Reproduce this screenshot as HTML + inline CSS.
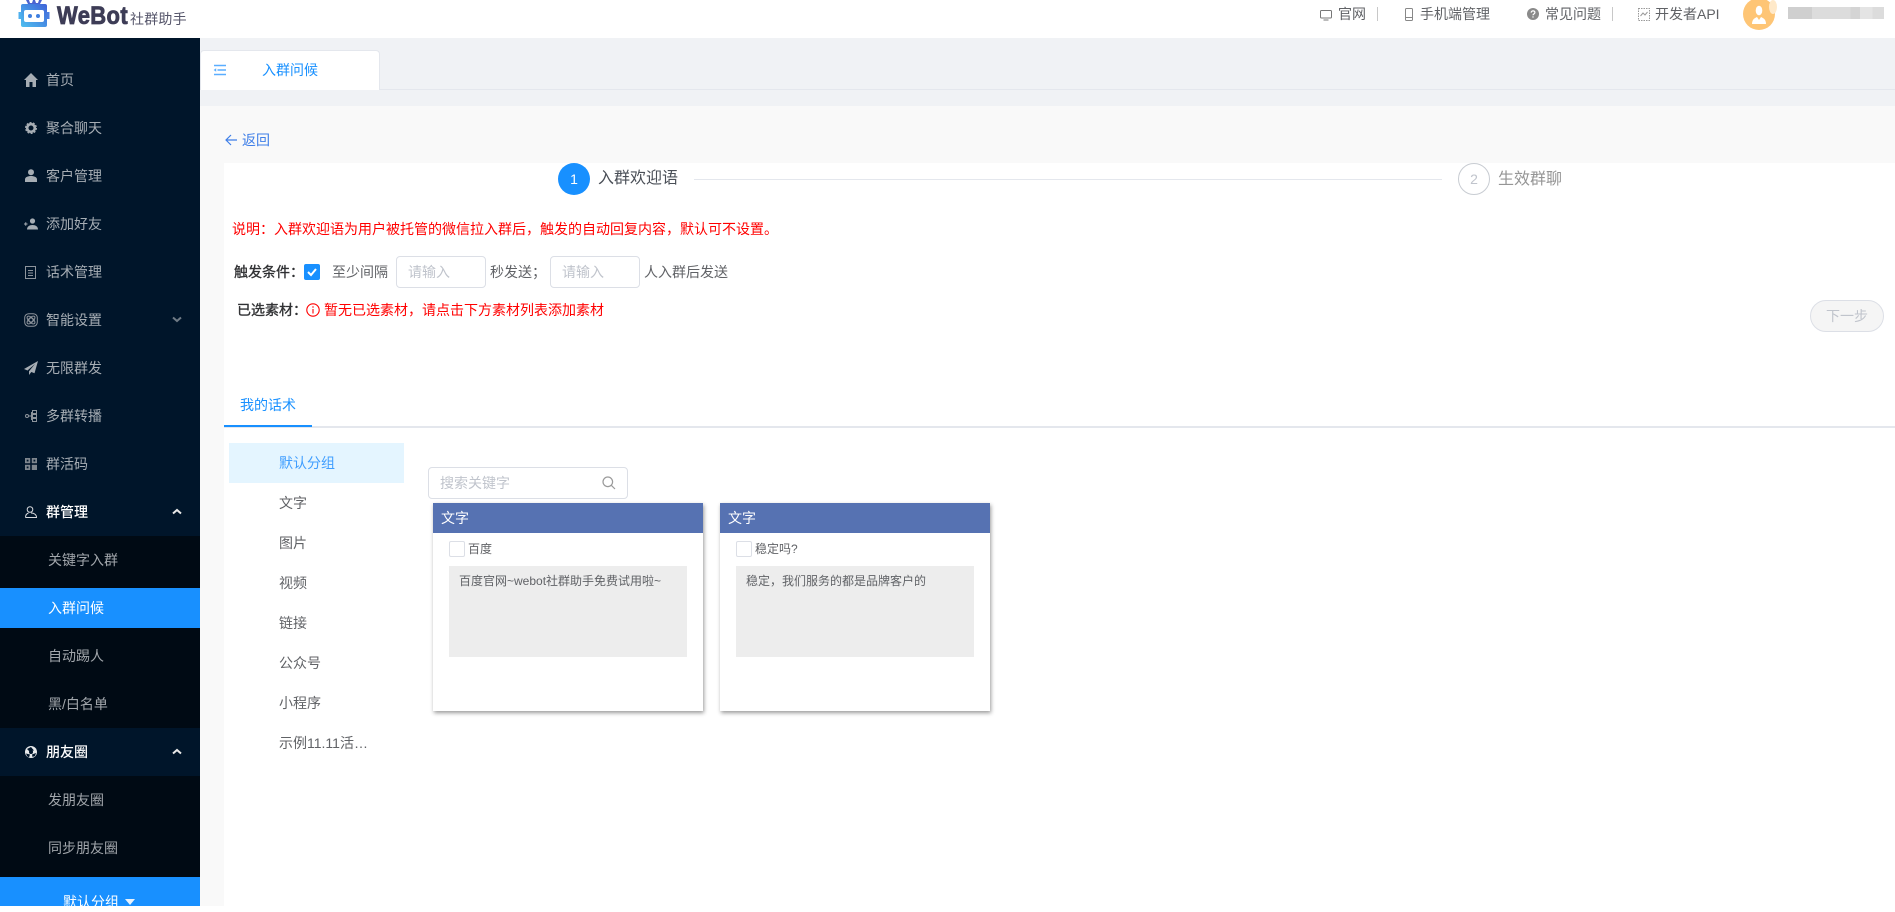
<!DOCTYPE html>
<html lang="zh">
<head>
<meta charset="utf-8">
<title>WeBot 社群助手</title>
<style>
*{box-sizing:border-box;margin:0;padding:0}
html,body{width:1895px;height:906px;overflow:hidden;background:#fff;font-family:"Liberation Sans","Noto Sans CJK SC",sans-serif;font-size:14px;color:#606266}
.a{position:absolute}
.t{position:absolute;line-height:20px;height:20px;white-space:nowrap}
.s{color:#a6adb4}
.b{-webkit-text-stroke:.35px currentColor}
svg{position:absolute;display:block}
.sub{color:#a1a6ab}
.card{position:absolute;top:503px;width:270px;height:208px;background:#fff;box-shadow:1px 2px 4px rgba(0,0,0,.4)}
.ch{position:absolute;left:0;top:0;width:100%;height:30px;background:#5672b2;color:#fff;line-height:30px;padding-left:8px;font-size:14px}
.cb{position:absolute;left:16px;top:38px;width:16px;height:16px;background:#fff;border:1px solid #dcdfe6;border-radius:2px}
.cl{position:absolute;left:35px;top:36px;font-size:12px;line-height:20px;color:#606266}
.cx{position:absolute;left:16px;top:63px;width:238px;height:91px;background:#ededed;font-size:12px;line-height:16px;padding:7px 10px;color:#606266}
.inp{position:absolute;width:90px;height:32px;border:1px solid #dcdfe6;border-radius:4px;background:#fff;color:#c0c4cc;line-height:30px;padding-left:11px;top:256px}
.li{position:absolute;left:279px;line-height:20px;height:20px;color:#606266;white-space:nowrap}
</style>
</head>
<body>
<!-- header -->
<div class="a" style="left:0;top:0;width:1895px;height:38px;background:#fff"></div>
<svg style="left:18px;top:0" width="32" height="28" viewBox="0 0 32 28">
<defs><linearGradient id="g" x1="0" y1="1" x2="1" y2="0"><stop offset="0" stop-color="#4fc0f0"/><stop offset="1" stop-color="#3f62d8"/></linearGradient></defs>
<path d="M8 0l2 4h12l2-4h-3l-1 3h-2l-1-3h-2l-1 3h-2l-1-3z" fill="#4a62d0"/>
<rect x="3" y="4" width="26" height="23" rx="2" fill="url(#g)"/>
<rect x="0.5" y="12" width="3" height="7" fill="#4fb0ee"/><rect x="28.500" y="12" width="3" height="7" fill="#4a7ee0"/>
<rect x="6" y="10" width="20" height="12" rx="2" fill="#fff"/>
<circle cx="12" cy="16" r="2" fill="#3f7fe0"/><circle cx="20" cy="16" r="2" fill="#3f7fe0"/>
</svg>
<div class="t" style="left:57px;top:3px;line-height:26px;height:26px;font-size:25px;font-weight:bold;color:#3d3c56;-webkit-text-stroke:.8px #3d3c56;letter-spacing:.4px;transform:scaleX(.88);transform-origin:0 50%">WeBot</div>
<div class="t" style="left:130px;top:9px;font-size:14px;color:#55556a;letter-spacing:.2px">社群助手</div>

<svg style="left:1320px;top:9px" width="12" height="12" viewBox="0 0 12 12" fill="none" stroke="#777"><rect x=".5" y="1.500" width="11" height="7.500" rx="1"/><path d="M3.500 11h5" /></svg>
<div class="t" style="left:1338px;top:4px;color:#606266">官网</div>
<div class="a" style="left:1377px;top:7px;width:1px;height:14px;background:#c8c8c8"></div>
<svg style="left:1404px;top:8px" width="10" height="13" viewBox="0 0 10 13" fill="none" stroke="#888"><rect x="1.500" y=".5" width="7" height="12" rx="1"/><path d="M1.500 9.500h7"/></svg>
<div class="t" style="left:1420px;top:4px;color:#606266">手机端管理</div>
<svg style="left:1527px;top:8px" width="12" height="12" viewBox="0 0 12 12"><circle cx="6" cy="6" r="6" fill="#8a8a8a"/><path d="M4.200 4.600c0-2.300 3.700-2.300 3.700 0 0 1.300-1.900 1.300-1.900 2.700" fill="none" stroke="#fff" stroke-width="1.200"/><rect x="5.400" y="8.300" width="1.200" height="1.300" fill="#fff"/></svg>
<div class="t" style="left:1545px;top:4px;color:#606266">常见问题</div>
<div class="a" style="left:1612px;top:7px;width:1px;height:14px;background:#c8c8c8"></div>
<svg style="left:1638px;top:8px" width="12" height="13" viewBox="0 0 12 13" fill="none" stroke="#999" stroke-dasharray="1.500 1"><rect x=".5" y=".5" width="11" height="12"/><path d="M2.500 8l2.500-3 2 2 2.500-3" stroke-dasharray="none"/></svg>
<div class="t" style="left:1655px;top:4px;color:#606266">开发者API</div>
<div class="a" style="left:1743px;top:-2px;width:32px;height:32px;border-radius:50%;background:#fec575"></div>
<div class="a" style="left:1769px;top:0;width:8px;height:14px;border-radius:50%;background:#ffe9c9"></div>
<svg style="left:1751px;top:5px" width="16" height="20" viewBox="0 0 16 20"><ellipse cx="8" cy="5.500" rx="3.300" ry="4.800" fill="#fff"/><path d="M1 19c0-5 3-6 5-7l2 3 2-3c2 1 5 2 5 7z" fill="#fff"/></svg>
<div class="a" style="left:1788px;top:7px;width:96px;height:12px;background:linear-gradient(90deg,#cfcfcf 0,#cfcfcf 25%,#dcdcdc 25%,#dcdcdc 65%,#d4d4d4 65%,#d4d4d4 75%,#e4e4e4 75%,#e4e4e4 88%,#dcdcdc 88%)"></div>

<!-- sidebar -->
<div class="a" style="left:0;top:38px;width:200px;height:868px;background:#00152a"></div>
<div class="a" style="left:0;top:536px;width:200px;height:192px;background:#000a14"></div>
<div class="a" style="left:0;top:776px;width:200px;height:101px;background:#000a14"></div>
<div class="a" style="left:0;top:588px;width:200px;height:40px;background:#1890ff"></div>
<div class="a" style="left:0;top:877px;width:200px;height:29px;background:#1890ff"></div>

<!-- sidebar icons -->
<svg style="left:24px;top:73px" width="14" height="14" viewBox="0 0 14 14"><path d="M7 0L0 7h2v7h3.500V9h3v5H12V7h2z" fill="#a6adb4"/></svg>
<svg style="left:25px;top:122px" width="12" height="12" viewBox="0 0 12 12"><circle cx="6" cy="6" r="3.800" fill="none" stroke="#a6adb4" stroke-width="2.600"/><circle cx="6" cy="6" r="5.400" fill="none" stroke="#a6adb4" stroke-width="1.200" stroke-dasharray="2 1.400"/></svg>
<svg style="left:25px;top:169px" width="12" height="13" viewBox="0 0 12 13"><circle cx="6" cy="3.200" r="3" fill="#a6adb4"/><path d="M0 13v-2.500C0 8 3 7 6 7s6 1 6 3.500V13z" fill="#a6adb4"/></svg>
<svg style="left:24px;top:218px" width="14" height="12" viewBox="0 0 14 12"><circle cx="8.500" cy="3" r="2.600" fill="#a6adb4"/><path d="M3 11.500c0-3 2.500-4.500 5.500-4.500s5.500 1.500 5.500 4.500z" fill="#a6adb4"/><path d="M0 6h3.500M1.750 4.250v3.500" stroke="#a6adb4"/></svg>
<svg style="left:25px;top:266px" width="12" height="13" viewBox="0 0 12 13" fill="none" stroke="#8d949c"><rect x=".5" y=".5" width="10" height="12"/><path d="M3 4.500h5M3 7h5M3 9.500h5"/></svg>
<svg style="left:24px;top:313px" width="14" height="14" viewBox="0 0 14 14" fill="none" stroke="#8d949c"><rect x=".7" y=".7" width="12.600" height="12.600" rx="4"/><circle cx="7" cy="7" r="2"/><ellipse cx="7" cy="7" rx="5" ry="2.400" transform="rotate(45 7 7)"/><ellipse cx="7" cy="7" rx="5" ry="2.400" transform="rotate(-45 7 7)"/></svg>
<svg style="left:24px;top:361px" width="14" height="14" viewBox="0 0 14 14"><path d="M14 0L0 8l3.500 1.500L11 3 5 10.200V14l2.300-3 3.200 1.300z" fill="#a6adb4"/></svg>
<svg style="left:25px;top:410px" width="12" height="12" viewBox="0 0 12 12" fill="none" stroke="#8d949c"><circle cx="2" cy="6" r="1.500"/><path d="M3.500 6h3M6.500 2v8"/><rect x="7.500" y=".5" width="4" height="3"/><rect x="7.500" y="4.500" width="4" height="3"/><rect x="7.500" y="8.500" width="4" height="3"/></svg>
<svg style="left:25px;top:458px" width="12" height="12" viewBox="0 0 12 12" fill="#7f868e"><rect x="0" y="0" width="5.200" height="5.200"/><rect x="6.800" y="0" width="5.200" height="5.200"/><rect x="0" y="6.800" width="5.200" height="5.200"/><rect x="6.800" y="6.800" width="5.200" height="5.200"/><rect x="1.700" y="1.700" width="1.800" height="1.800" fill="#00152a"/><rect x="8.500" y="1.700" width="1.800" height="1.800" fill="#00152a"/><rect x="1.700" y="8.500" width="1.800" height="1.800" fill="#00152a"/></svg>
<svg style="left:25px;top:506px" width="12" height="12" viewBox="0 0 12 12" fill="none" stroke="#d8dade"><circle cx="5" cy="3.500" r="2.800"/><path d="M.5 11.500c0-3 1.500-4 3-4.500M6 7c3 0 5.500 1.500 5.500 4.500H.5"/></svg>
<svg style="left:25px;top:746px" width="12" height="12" viewBox="0 0 12 12"><circle cx="6" cy="6" r="6" fill="#e8eaec"/><circle cx="6" cy="6" r="2" fill="#00152a"/><path d="M6 1L9 4.500 4 5 2 3zM11 7L7 8.500 7.500 11 10 10zM1 7.500L5 8.500 4 11.500 2 10z" fill="#00152a"/></svg>

<!-- sidebar text -->
<div class="t s" style="left:46px;top:70px">首页</div>
<div class="t s" style="left:46px;top:118px">聚合聊天</div>
<div class="t s" style="left:46px;top:166px">客户管理</div>
<div class="t s" style="left:46px;top:214px">添加好友</div>
<div class="t s" style="left:46px;top:262px">话术管理</div>
<div class="t s" style="left:46px;top:310px">智能设置</div>
<svg style="left:172px;top:316px" width="10" height="7" viewBox="0 0 10 7"><path d="M1 1.500l4 3.500 4-3.500" fill="none" stroke="#6f7a85" stroke-width="2"/></svg>
<div class="t s" style="left:46px;top:358px">无限群发</div>
<div class="t s" style="left:46px;top:406px">多群转播</div>
<div class="t s" style="left:46px;top:454px">群活码</div>
<div class="t" style="left:46px;top:502px;color:#fff;font-weight:500">群管理</div>
<svg style="left:172px;top:508px" width="10" height="7" viewBox="0 0 10 7"><path d="M1 5.500l4-3.500 4 3.500" fill="none" stroke="#e8e8e8" stroke-width="2"/></svg>
<div class="t sub" style="left:48px;top:550px">关键字入群</div>
<div class="t" style="left:48px;top:598px;color:#fff">入群问候</div>
<div class="t sub" style="left:48px;top:646px">自动踢人</div>
<div class="t sub" style="left:48px;top:694px">黑/白名单</div>
<div class="t" style="left:46px;top:742px;color:#fff;font-weight:500">朋友圈</div>
<svg style="left:172px;top:748px" width="10" height="7" viewBox="0 0 10 7"><path d="M1 5.500l4-3.500 4 3.500" fill="none" stroke="#e8e8e8" stroke-width="2"/></svg>
<div class="t sub" style="left:48px;top:790px">发朋友圈</div>
<div class="t sub" style="left:48px;top:838px">同步朋友圈</div>
<div class="t" style="left:63px;top:892px;color:#fff">默认分组</div>
<svg style="left:125px;top:899px" width="10" height="6" viewBox="0 0 10 6"><path d="M0 0h10L5 6z" fill="#e8f2fc"/></svg>

<!-- tab area -->
<div class="a" style="left:200px;top:38px;width:1695px;height:68px;background:#f0f2f5"></div>
<div class="a" style="left:200px;top:89px;width:1695px;height:1px;background:#e4e7ed"></div>
<div class="a" style="left:200px;top:50px;width:180px;height:40px;background:#fff;border-radius:4px 4px 0 0;border:1px solid #e4e7ed;border-bottom:none"></div>
<svg style="left:213px;top:64px" width="14" height="12" viewBox="0 0 14 12" fill="none" stroke="#5aaeff" stroke-width="1.500"><path d="M1 1.500h12M4.500 6h8.500M1 10.500h12"/><path d="M3.200 4.200L.6 6l2.600 1.800z" fill="#5aaeff" stroke="none"/></svg>
<div class="t" style="left:262px;top:60px;color:#1890ff">入群问候</div>

<!-- content -->
<div class="a" style="left:200px;top:106px;width:1695px;height:800px;background:#f9f9f9"></div>
<div class="a" style="left:224px;top:163px;width:1671px;height:743px;background:#fff"></div>
<svg style="left:225px;top:134px" width="12" height="12" viewBox="0 0 12 12" fill="none" stroke="#3f7fe8" stroke-width="1.200"><path d="M6 1L1 6l5 5M1 6h11"/></svg>
<div class="t" style="left:242px;top:130px;color:#3f7fe8">返回</div>

<!-- steps -->
<div class="a" style="left:558px;top:163px;width:32px;height:32px;border-radius:50%;background:#1890ff;color:#fff;text-align:center;line-height:32px;font-size:14px">1</div>
<div class="t" style="left:598px;top:169px;font-size:16px;color:#4a4f57">入群欢迎语</div>
<div class="a" style="left:694px;top:179px;width:748px;height:1px;background:#e4e7ed"></div>
<div class="a" style="left:1458px;top:163px;width:32px;height:32px;border-radius:50%;border:1px solid #c8ccd2;color:#c0c4cc;text-align:center;line-height:30px;font-size:14px">2</div>
<div class="t" style="left:1498px;top:170px;font-size:16px;color:#959595">生效群聊</div>

<!-- notes -->
<div class="t" style="left:232px;top:219px;color:#f00">说明&#xFF1A;入群欢迎语为用户被托管的微信拉入群后&#xFF0C;触发的自动回复内容&#xFF0C;默认可不设置。</div>
<div class="t b" style="left:234px;top:262px;color:#303133">触发条件&#xFF1A;</div>
<div class="a" style="left:304px;top:264px;width:16px;height:16px;background:#1890ff;border-radius:2px"></div>
<svg style="left:304px;top:264px" width="16" height="16" viewBox="0 0 16 16"><path d="M4 8l3 3 5-6" fill="none" stroke="#fff" stroke-width="2"/></svg>
<div class="t" style="left:332px;top:262px">至少间隔</div>
<div class="inp" style="left:396px">请输入</div>
<div class="t" style="left:490px;top:262px">秒发送&#xFF1B;</div>
<div class="inp" style="left:550px">请输入</div>
<div class="t" style="left:644px;top:262px">人入群后发送</div>
<div class="t b" style="left:237px;top:300px;color:#303133">已选素材&#xFF1A;</div>
<svg style="left:306px;top:303px" width="14" height="14" viewBox="0 0 14 14" fill="none" stroke="#f00" stroke-width="1.100"><circle cx="7" cy="7" r="6.200"/><path d="M7 6v4.500M7 3.300v1.400"/></svg>
<div class="t" style="left:324px;top:300px;color:#f00">暂无已选素材&#xFF0C;请点击下方素材列表添加素材</div>

<div class="a" style="left:1810px;top:300px;width:74px;height:32px;border-radius:16px;border:1px solid #dcdfe6;background:#f5f5f5;color:#c0c4cc;text-align:center;line-height:30px">下一步</div>

<!-- tabs -->
<div class="t" style="left:240px;top:395px;color:#1890ff">我的话术</div>
<div class="a" style="left:224px;top:426px;width:1671px;height:2px;background:#e4e7ed"></div>
<div class="a" style="left:224px;top:425px;width:88px;height:2px;background:#1890ff"></div>

<!-- list -->
<div class="a" style="left:229px;top:443px;width:175px;height:40px;background:#e4f5ff"></div>
<div class="li" style="top:453px;color:#409eff">默认分组</div>
<div class="li" style="top:493px">文字</div>
<div class="li" style="top:533px">图片</div>
<div class="li" style="top:573px">视频</div>
<div class="li" style="top:613px">链接</div>
<div class="li" style="top:653px">公众号</div>
<div class="li" style="top:693px">小程序</div>
<div class="li" style="top:733px">示例11.11活…</div>

<!-- search -->
<div class="a" style="left:428px;top:467px;width:200px;height:32px;border:1px solid #dcdfe6;border-radius:4px;background:#fff;color:#c0c4cc;line-height:30px;padding-left:11px">搜索关键字</div>
<svg style="left:602px;top:476px" width="14" height="14" viewBox="0 0 14 14" fill="none" stroke="#9a9a9a" stroke-width="1.200"><circle cx="5.800" cy="5.800" r="4.800"/><path d="M9.300 9.300L13 13"/></svg>

<!-- cards -->
<div class="card" style="left:433px">
  <div class="ch">文字</div><div class="cb"></div><div class="cl">百度</div>
  <div class="cx">百度官网~webot社群助手免费试用啦~</div>
</div>
<div class="card" style="left:720px">
  <div class="ch">文字</div><div class="cb"></div><div class="cl">稳定吗?</div>
  <div class="cx">稳定&#xFF0C;我们服务的都是品牌客户的</div>
</div>
</body>
</html>
